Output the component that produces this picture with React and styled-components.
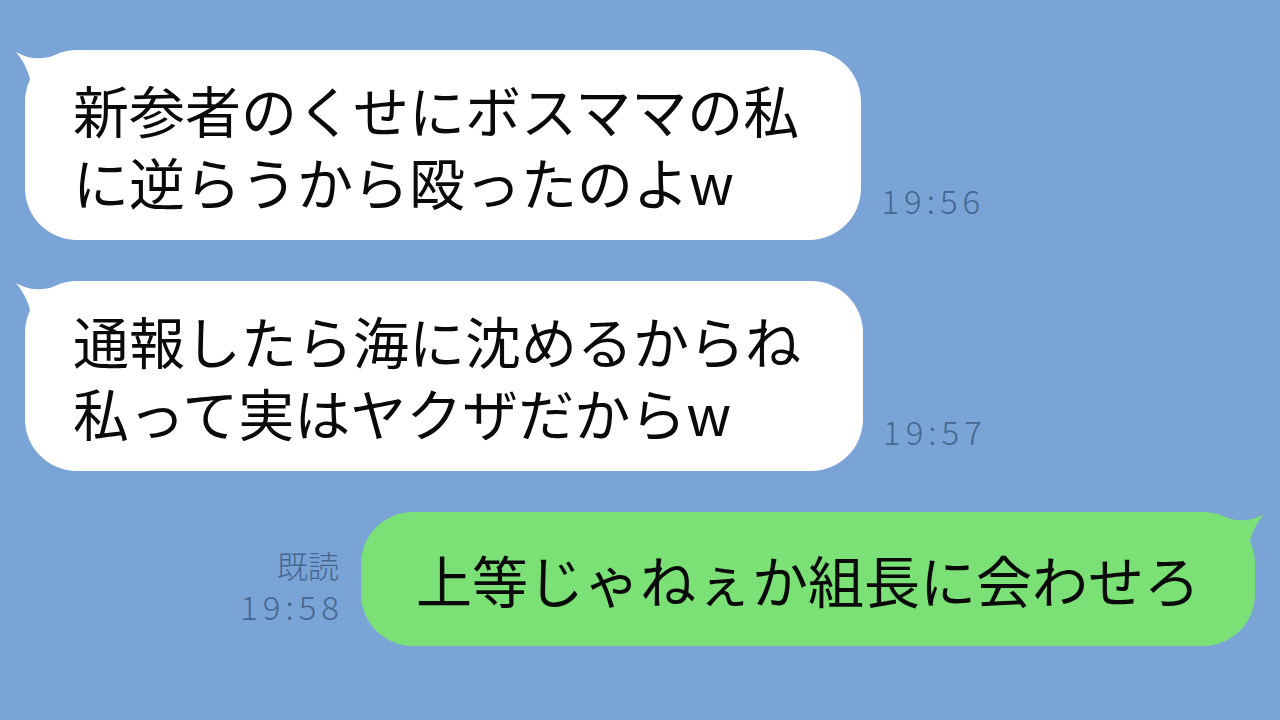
import React from 'react'
import styled, { createGlobalStyle } from 'styled-components';

const GlobalStyle = createGlobalStyle`
    html, body {
        margin: 0;
        padding: 0;
        background: #7ba4d6;
    }
`

const messages = [
    { id: 1, side: 'left', lines: ['新参者のくせにボスママの私', 'に逆らうから殴ったのよw'], time: '19:56' },
    { id: 2, side: 'left', lines: ['通報したら海に沈めるからね', '私って実はヤクザだからw'], time: '19:57' },
    { id: 3, side: 'right', lines: ['上等じゃねぇか組長に会わせろ'], time: '19:58', read: true },
];

function Tail({ side, color }) {
    return (
        <TailSvg side={side} viewBox="0 0 50 50" width="50" height="50">
            <path d="M0 2 C 14 10, 26 10, 44 4 L 46 34 L 16 46 C 16 28, 10 14, 0 2 Z" fill={color} />
        </TailSvg>
    )
}

function App() {
    return (
        <Screen>
            <GlobalStyle />
            {messages.map((m) =>
                m.side === 'left' ? (
                    <Row key={m.id} side="left">
                        <Bubble side="left">
                            <Tail side="left" color="#ffffff" />
                            {m.lines.map((l, i) => <Line key={i}>{l}</Line>)}
                        </Bubble>
                        <Meta side="left">
                            <Time>{m.time}</Time>
                        </Meta>
                    </Row>
                ) : (
                    <Row key={m.id} side="right">
                        <Meta side="right">
                            {m.read && <Read>既読</Read>}
                            <Time>{m.time}</Time>
                        </Meta>
                        <Bubble side="right">
                            <Tail side="right" color="#7be075" />
                            {m.lines.map((l, i) => <Line key={i}>{l}</Line>)}
                        </Bubble>
                    </Row>
                )
            )}
        </Screen>
    )
};

export default App;

const Screen = styled.div`
    width: 1280px;
    height: 720px;
    box-sizing: border-box;
    padding: 50px 25px 0 25px;
    display: flex;
    flex-direction: column;
    gap: 41px;
    background: #7ba4d6;
    overflow: hidden;
    font-family: "Noto Sans CJK JP", "Noto Sans", sans-serif;
`

const Row = styled.div`
    display: flex;
    align-items: flex-end;
    justify-content: ${(p) => (p.side === 'left' ? 'flex-start' : 'flex-end')};
    gap: ${(p) => (p.side === 'left' ? '20px' : '22px')};
`

const Bubble = styled.div`
    position: relative;
    background: ${(p) => (p.side === 'left' ? '#ffffff' : '#7be075')};
    border-radius: 52px;
    box-sizing: border-box;
    padding: ${(p) => (p.side === 'left' ? '23px 62px 23px 48px' : '31px 55px 31px 55px')};
    color: #0a0a0a;
    font-size: 56px;
    line-height: 72px;
    letter-spacing: 0;
    white-space: nowrap;
`

const TailSvg = styled.svg`
    position: absolute;
    top: 0;
    ${(p) => (p.side === 'left' ? 'left: -9px;' : 'right: -9px; transform: scaleX(-1);')}
`

const Line = styled.div`
    position: relative;
`

const Meta = styled.div`
    display: flex;
    flex-direction: column;
    align-items: ${(p) => (p.side === 'left' ? 'flex-start' : 'flex-end')};
    padding-bottom: 20px;
    color: #46678f;
    font-weight: 300;
`

const Read = styled.div`
    font-size: 31px;
    line-height: 42px;
`

const Time = styled.div`
    font-size: 33px;
    line-height: 40px;
    letter-spacing: 5px;
    margin-right: -5px;
`
